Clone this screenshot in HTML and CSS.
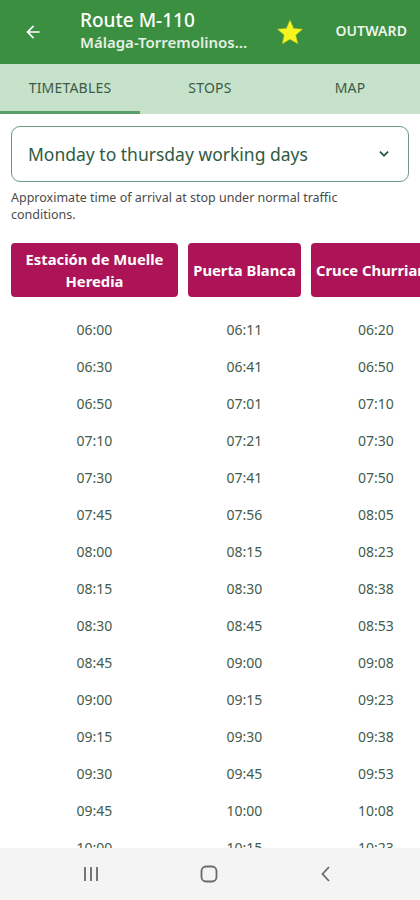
FILE: index.html
```html
<!DOCTYPE html>
<html>
<head>
<meta charset="utf-8">
<link rel="stylesheet" href="styles.css">
</head>
<body>
<div class="app">
  <header class="appbar">
    <svg class="back" width="20" height="20" viewBox="0 0 24 24"><path d="M20 11H7.83l5.59-5.59L12 4l-8 8 8 8 1.41-1.41L7.83 13H20v-2z" fill="#fff"/></svg>
    <div class="titles">
      <div class="title">Route M-110</div>
      <div class="subtitle">Málaga-Torremolinos…</div>
    </div>
    <svg class="star" width="30" height="30" viewBox="0 0 24 24"><path d="M12 2.5l2.9 6.6 7.1.6-5.4 4.7 1.6 7-6.2-3.7-6.2 3.7 1.6-7L2 9.7l7.1-.6z" fill="#f5f520" stroke="#c8c820" stroke-width="0.4"/></svg>
    <div class="outward">OUTWARD</div>
  </header>
  <nav class="tabs">
    <div class="tab active">TIMETABLES</div>
    <div class="tab">STOPS</div>
    <div class="tab">MAP</div>
  </nav>
  <main class="content">
    <div class="select">
      <span>Monday to thursday working days</span>
      <svg width="14" height="14" viewBox="0 0 24 24"><path d="M5 8l7 7 7-7" fill="none" stroke="#2f5e3d" stroke-width="3.2"/></svg>
    </div>
    <p class="note">Approximate time of arrival at stop under normal traffic conditions.</p>
    <div class="table">
      <div class="stop">Estación de Muelle Heredia</div>
      <div class="stop">Puerta Blanca</div>
      <div class="stop">Cruce Churriana</div>
    </div>
    <div class="times">
      <div>06:00</div><div>06:11</div><div>06:20</div>
      <div>06:30</div><div>06:41</div><div>06:50</div>
      <div>06:50</div><div>07:01</div><div>07:10</div>
      <div>07:10</div><div>07:21</div><div>07:30</div>
      <div>07:30</div><div>07:41</div><div>07:50</div>
      <div>07:45</div><div>07:56</div><div>08:05</div>
      <div>08:00</div><div>08:15</div><div>08:23</div>
      <div>08:15</div><div>08:30</div><div>08:38</div>
      <div>08:30</div><div>08:45</div><div>08:53</div>
      <div>08:45</div><div>09:00</div><div>09:08</div>
      <div>09:00</div><div>09:15</div><div>09:23</div>
      <div>09:15</div><div>09:30</div><div>09:38</div>
      <div>09:30</div><div>09:45</div><div>09:53</div>
      <div>09:45</div><div>10:00</div><div>10:08</div>
      <div>10:00</div><div>10:15</div><div>10:23</div>
    </div>
  </main>
  <div class="sysnav">
    <svg width="20" height="20" viewBox="0 0 20 20"><path d="M4 3v14M10 3v14M16 3v14" stroke="#6a6a6a" stroke-width="1.8" fill="none"/></svg>
    <svg width="20" height="20" viewBox="0 0 20 20"><rect x="2.5" y="2.5" width="15" height="15" rx="4.5" stroke="#6a6a6a" stroke-width="1.8" fill="none"/></svg>
    <svg width="20" height="20" viewBox="0 0 20 20"><path d="M13 3l-6.5 7 6.5 7" stroke="#6a6a6a" stroke-width="1.8" fill="none"/></svg>
  </div>
</div>
</body>
</html>
```

FILE: styles.css
```css
* { box-sizing: border-box; }
html, body { margin: 0; padding: 0; }
body {
  width: 420px;
  height: 900px;
  overflow: hidden;
  background: #fff;
  font-family: "Noto Sans", "Open Sans", sans-serif;
}
.app { width: 420px; height: 900px; position: relative; overflow: hidden; }
.appbar {
  height: 64px;
  background: #3a8f40;
  display: flex;
  align-items: center;
  color: #fff;
}
.back { margin-left: 23px; margin-right: 37px; }
.titles { flex: 1; display: flex; flex-direction: column; margin-top: -4px; }
.title { font-size: 19px; line-height: 24px; font-weight: 500; }
.subtitle { font-size: 15px; line-height: 21px; font-weight: 600; color: #e4f0e4; }
.star { margin-right: 30px; margin-top: 0; }
.outward { font-size: 14px; font-weight: 600; margin-right: 13px; color: #eef5ee; letter-spacing: 0.1px; margin-top: -3px; }
.tabs {
  height: 50px;
  background: #c6e2cb;
  display: flex;
}
.tab {
  width: 140px;
  display: flex;
  align-items: center;
  justify-content: center;
  font-size: 14px;
  color: #3d5a46;
  letter-spacing: 0.2px;
  border-bottom: 3px solid transparent;
  padding-bottom: 1px;
}
.tab.active { border-bottom-color: #5a9e68; }
.content { padding: 12px 0 0 11px; }
.select {
  width: 398px;
  height: 56px;
  border: 1.5px solid #6e9a80;
  border-radius: 9px;
  display: flex;
  align-items: center;
  justify-content: space-between;
  padding: 0 17px 0 16px;
  font-size: 17.5px;
  color: #2f5a42;
}
.note {
  margin: 7px 0 0;
  font-size: 12.5px;
  line-height: 17px;
  color: #4a4a4a;
  width: 360px;
}
.table {
  display: flex;
  gap: 10px;
  margin-top: 20px;
  width: 420px;
}
.stop {
  flex: none;
  height: 54px;
  background: #ad1457;
  border-radius: 4px;
  color: #fff;
  font-weight: 700;
  font-size: 14.8px;
  line-height: 22px;
  display: flex;
  align-items: center;
  justify-content: center;
  text-align: center;
  white-space: nowrap;
  overflow: hidden;
  padding: 0 5px;
}
.stop:nth-child(1) { width: 167px; white-space: normal; }
.stop:nth-child(2) { width: 113px; }
.stop:nth-child(3) { width: 130px; justify-content: flex-start; }
.times {
  display: grid;
  grid-template-columns: 167px 113px 130px;
  column-gap: 10px;
  grid-auto-rows: 37px;
  margin-top: 14px;
  width: 440px;
}
.times div {
  display: flex;
  align-items: center;
  justify-content: center;
  font-size: 14px;
  color: #435c4c;
}
.sysnav {
  position: absolute;
  left: 0;
  right: 0;
  bottom: 0;
  height: 52px;
  background: #f4f4f4;
  display: flex;
  align-items: center;
  justify-content: space-between;
  padding: 0 84px 0 81px;
}
```
